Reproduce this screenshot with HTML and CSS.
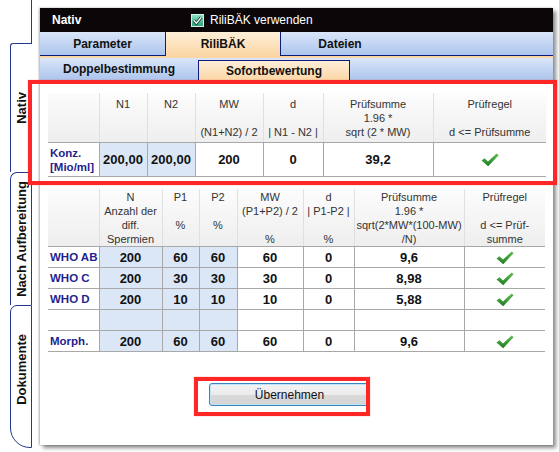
FILE: index.html
```html
<!DOCTYPE html>
<html lang="de">

    <head>
        <meta charset="UTF-8">
        <meta name="viewport" content="width=device-width, initial-scale=1.0">
        <title>RiliBÄK Sofortbewertung</title>
        <link rel="stylesheet" href="styles.css">
    </head>

    <body>
        <svg class="defs" width="0" height="0">
            <defs>
                <linearGradient id="okGrad" x1="0" y1="0" x2="0" y2="1">
                    <stop offset="0" stop-color="#5cbf4f" />
                    <stop offset="1" stop-color="#1d7a22" />
                </linearGradient>
                <symbol id="ok" viewBox="0 0 18 14">
                    <path d="M0.5 7.5 L3.5 5.2 L7 8.6 L15.6 0.6 L17.6 2.2 L7.2 13.2 Z" fill="url(#okGrad)" />
                </symbol>
            </defs>
        </svg>

        <div class="screen">
            <div class="side">
                <div class="side-top"></div>
                <div class="vtab active"><span>Nativ</span></div>
                <div class="vtab mid"><span>Nach Aufbereitung</span></div>
                <div class="vtab last"><span>Dokumente</span></div>
            </div>

            <div class="panel">
                <div class="panel-head">
                    <span class="panel-title">Nativ</span>
                    <svg class="cb" viewBox="0 0 13 13">
                        <defs>
                            <linearGradient id="cbGrad" x1="0" y1="0" x2="0" y2="1">
                                <stop offset="0" stop-color="#8fe3c4" />
                                <stop offset="1" stop-color="#2b9e7b" />
                            </linearGradient>
                        </defs>
                        <rect x="0.5" y="0.5" width="12" height="12" fill="url(#cbGrad)" stroke="#d8f0ea" />
                        <path d="M2.8 6.6 L5.4 9.2 L10.2 3.4" fill="none" stroke="#12302a" stroke-width="3" />
                        <path d="M2.8 6.6 L5.4 9.2 L10.2 3.4" fill="none" stroke="#fff" stroke-width="1.4" />
                    </svg>
                    <span class="cb-label">RiliBÄK verwenden</span>
                </div>

                <div class="tabrow top">
                    <div class="tab w-param">Parameter</div>
                    <div class="tab on w-rili">RiliBÄK</div>
                    <div class="tab w-dat">Dateien</div>
                    <div class="tab fill"></div>
                </div>
                <div class="tabgap"></div>
                <div class="tabrow sub">
                    <div class="tab w-doppel">Doppelbestimmung</div>
                    <div class="tab on w-sofort">Sofortbewertung</div>
                    <div class="tab fill"></div>
                </div>

                <div class="content">
                    <!-- Doppelbestimmung der Konzentration -->
                    <table class="grid t1">
                        <colgroup>
                            <col style="width: 51px">
                            <col style="width: 48px">
                            <col style="width: 48px">
                            <col style="width: 68px">
                            <col style="width: 60px">
                            <col style="width: 110px">
                            <col style="width: 113px">
                        </colgroup>
                        <thead>
                            <tr>
                                <th></th>
                                <th>N1</th>
                                <th>N2</th>
                                <th>MW<br><br>(N1+N2) / 2</th>
                                <th>d<br><br>| N1 - N2 |</th>
                                <th>Prüfsumme<br>1.96 *<br>sqrt (2 * MW)</th>
                                <th>Prüfregel<br><br>d &lt;= Prüfsumme</th>
                            </tr>
                        </thead>
                        <tbody>
                            <tr>
                                <td class="lbl">Konz.<br>[Mio/ml]</td>
                                <td class="in">200,00</td>
                                <td class="in">200,00</td>
                                <td>200</td>
                                <td>0</td>
                                <td>39,2</td>
                                <td><svg class="ok"><use href="#ok" /></svg></td>
                            </tr>
                        </tbody>
                    </table>

                    <!-- Morphologie -->
                    <table class="grid t2">
                        <colgroup>
                            <col style="width: 51px">
                            <col style="width: 63px">
                            <col style="width: 37px">
                            <col style="width: 38px">
                            <col style="width: 66px">
                            <col style="width: 51px">
                            <col style="width: 110px">
                            <col style="width: 81px">
                        </colgroup>
                        <thead>
                            <tr>
                                <th></th>
                                <th>N<br>Anzahl der<br>diff.<br>Spermien</th>
                                <th>P1<br><br>%</th>
                                <th>P2<br><br>%</th>
                                <th>MW<br>(P1+P2) / 2<br><br>%</th>
                                <th>d<br>| P1-P2 |<br><br>%</th>
                                <th>Prüfsumme<br>1.96 *<br>sqrt(2*MW*(100-MW)<br>/N)</th>
                                <th>Prüfregel<br><br>d &lt;= Prüf-<br>summe</th>
                            </tr>
                        </thead>
                        <tbody>
                            <tr>
                                <td class="lbl">WHO AB</td>
                                <td class="in">200</td>
                                <td class="in">60</td>
                                <td class="in">60</td>
                                <td>60</td>
                                <td>0</td>
                                <td>9,6</td>
                                <td><svg class="ok"><use href="#ok" /></svg></td>
                            </tr>
                            <tr>
                                <td class="lbl">WHO C</td>
                                <td class="in">200</td>
                                <td class="in">30</td>
                                <td class="in">30</td>
                                <td>30</td>
                                <td>0</td>
                                <td>8,98</td>
                                <td><svg class="ok"><use href="#ok" /></svg></td>
                            </tr>
                            <tr>
                                <td class="lbl">WHO D</td>
                                <td class="in">200</td>
                                <td class="in">10</td>
                                <td class="in">10</td>
                                <td>10</td>
                                <td>0</td>
                                <td>5,88</td>
                                <td><svg class="ok"><use href="#ok" /></svg></td>
                            </tr>
                            <tr>
                                <td class="lbl"></td>
                                <td class="in"></td>
                                <td class="in"></td>
                                <td class="in"></td>
                                <td></td>
                                <td></td>
                                <td></td>
                                <td></td>
                            </tr>
                            <tr>
                                <td class="lbl">Morph.</td>
                                <td class="in">200</td>
                                <td class="in">60</td>
                                <td class="in">60</td>
                                <td>60</td>
                                <td>0</td>
                                <td>9,6</td>
                                <td><svg class="ok"><use href="#ok" /></svg></td>
                            </tr>
                        </tbody>
                    </table>

                    <button class="btn">Übernehmen</button>
                </div>
            </div>

            <!-- red highlight frames -->
            <div class="mark mark-table"></div>
            <div class="mark mark-btn"></div>
        </div>
    </body>

</html>
```

FILE: styles.css
```css
body {
    margin: 0;
    background: #fff;
    font-family: "Liberation Sans", Arial, sans-serif;
}

.defs {
    position: absolute;
}

.screen {
    position: relative;
    display: flex;
    width: 559px;
    height: 452px;
    overflow: hidden;
}

/* vertical tabs on the left */
.side {
    width: 40px;
    flex-shrink: 0;
    display: flex;
    flex-direction: column;
}

.side-top {
    width: 32px;
    height: 43px;
    box-sizing: border-box;
    border-right: 1px solid #24398c;
}

.vtab {
    margin-left: 10px;
    width: 22px;
    box-sizing: border-box;
    display: flex;
    align-items: center;
    justify-content: center;
    border-left: 1px solid #24398c;
    background: #fff;
}

.vtab span {
    writing-mode: vertical-rl;
    transform: rotate(180deg);
    font-size: 13px;
    font-weight: bold;
    color: #111;
    white-space: nowrap;
}

.vtab.active {
    height: 129px;
    border-top: 1px solid #24398c;
    border-top-left-radius: 3px;
}

.vtab.mid {
    height: 133px;
    border-right: 1px solid #24398c;
    border-top: 1px solid #24398c;
    border-top-left-radius: 7px;
}

.vtab.last {
    height: 143px;
    padding-bottom: 14px;
    border: 1px solid #24398c;
    border-top-left-radius: 7px;
    border-bottom-left-radius: 20px;
}

/* main window */
.panel {
    margin-top: 8px;
    width: 513px;
    height: 437px;
    display: flex;
    flex-direction: column;
    background: #fff;
    box-shadow: 3px 3px 4px rgba(0, 0, 0, 0.45), -1px 0 2px rgba(0, 0, 0, 0.3);
}

.panel-head {
    height: 24px;
    display: flex;
    align-items: center;
    background: #0b0709;
    color: #fff;
}

.panel-title {
    width: 139px;
    padding-left: 12px;
    font-size: 12px;
    font-weight: bold;
}

.cb {
    width: 13px;
    height: 13px;
    margin-right: 6px;
}

.cb-label {
    font-size: 12px;
}

.tabrow {
    display: flex;
    background: linear-gradient(#dae6f9, #aac3ec);
}

.tabrow.top {
    height: 24px;
}

.tabrow.sub {
    height: 23px;
}

.tab {
    box-sizing: border-box;
    display: flex;
    align-items: center;
    justify-content: center;
    font-size: 12px;
    font-weight: bold;
    color: #111;
    border-bottom: 1px solid #0c1c7c;
}

.tab.fill {
    flex: 1;
}

.tab.on {
    background: linear-gradient(#feeed8, #fbd6a4);
    border: 1px solid #0c1c7c;
    border-bottom: none;
}

.tabrow.top .tab.on {
    border-top: none;
}

.tabrow.sub .tab.on {
    margin-top: 2px;
}

.tabgap {
    height: 2px;
    background: #fbd6a4;
}

.w-param { width: 125px; }
.w-rili { width: 116px; }
.w-dat { width: 118px; }
.w-doppel { width: 158px; }
.w-sofort { width: 152px; }

.content {
    padding: 12px 7px 0 8px;
}

/* tables */
.grid {
    table-layout: fixed;
    border-collapse: collapse;
    width: 498px;
}

.grid.t2 {
    width: 497px;
    margin-top: 12px;
}

.grid th {
    padding: 4px 0 3px;
    vertical-align: top;
    font-size: 11px;
    font-weight: normal;
    line-height: 14px;
    color: #333;
    background: linear-gradient(#fcfcfc, #eeeeee);
    border-left: 1px solid #e0e0e0;
    border-bottom: 1px solid #a8a8a8;
    white-space: nowrap;
}

.grid th:first-child {
    border-left: none;
}

.grid.t2 th {
    padding: 1px 0 0;
}

.grid td {
    padding: 0;
    text-align: center;
    vertical-align: middle;
    font-size: 13px;
    font-weight: bold;
    color: #111;
    border-left: 1px solid #a8a8a8;
    border-bottom: 1px solid #a8a8a8;
}

.grid.t1 td {
    height: 33px;
}

.grid.t2 td {
    height: 20px;
}

.grid td.lbl {
    border-left: none;
    text-align: left;
    padding-left: 2px;
    font-size: 11.5px;
    line-height: 14px;
    color: #1f1f8e;
}

.grid td.in {
    background: #dbe7f7;
}

.ok {
    width: 18px;
    height: 14px;
    vertical-align: middle;
}

/* button */
.btn {
    margin: 31px 0 0 161px;
    width: 161px;
    height: 23px;
    padding: 0;
    border: 1px solid #3d86bd;
    border-radius: 3px;
    background: linear-gradient(#f4f4f4 0%, #ebebeb 50%, #dadada 51%, #d4d4d4 100%);
    box-shadow: inset 0 0 0 1px #bfe3f8;
    font-family: "Liberation Sans", Arial, sans-serif;
    font-size: 12px;
    color: #111;
}

/* red highlight frames */
.mark {
    position: absolute;
    box-sizing: border-box;
    border: 4px solid #ff2626;
    box-shadow: 0 0 1px rgba(255, 0, 0, 0.5);
}

.mark-table {
    left: 28px;
    top: 80px;
    width: 529px;
    height: 105px;
}

.mark-btn {
    left: 194px;
    top: 377px;
    width: 176px;
    height: 39px;
}
```
